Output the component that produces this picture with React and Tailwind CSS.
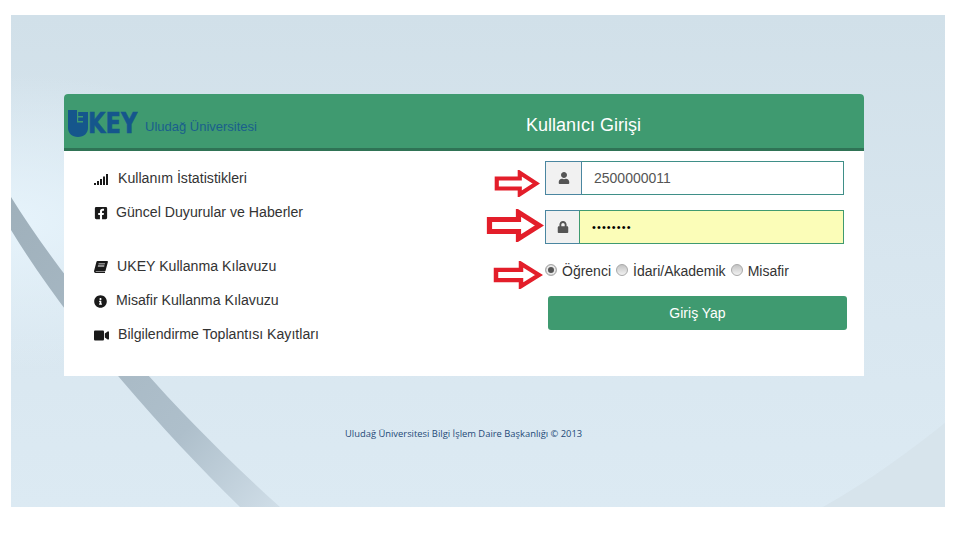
import { FaUser, FaLock, FaFacebookSquare, FaInfoCircle, FaVideo } from 'react-icons/fa';

const SignalIcon = () => (
  <svg width="15" height="11" viewBox="0 0 15 11" fill="currentColor">
    <rect x="0" y="9" width="2" height="2" />
    <rect x="3" y="7" width="2" height="4" />
    <rect x="6" y="5" width="2" height="6" />
    <rect x="9" y="2.5" width="2" height="8.5" />
    <rect x="12" y="0" width="2" height="11" />
  </svg>
);

const BookIcon = () => (
  <svg width="14" height="12" viewBox="0 0 14 12" fill="currentColor">
    <path d="M3.4 0 H13.2 C13.8 0 14 .4 13.9 1 L11.6 9.6 C11.4 10.4 11 10.6 10.2 10.6 H2 C1.6 10.6 1.5 11 2.2 11 H11 L11 12 H1.6 C.5 12 -.2 11 .1 9.8 L2.4 1 C2.6 .3 2.9 0 3.4 0 Z M4.6 2.4 L4.4 3.2 H10.8 L11 2.4 Z M4 4.6 L3.8 5.4 H10.2 L10.4 4.6 Z" fillRule="evenodd" />
  </svg>
);

const Arrow = ({ className, width, height }) => (
  <svg className={className} width={width} height={height} viewBox="0 0 50 30" preserveAspectRatio="none" fill="#fff" stroke="#e31e2a" strokeWidth="4.5">
    <path d="M3 9.5 H28 V3 L46 15 L28 27 V20.5 H3 Z" />
  </svg>
);

const LogoU = () => (
  <svg width="20" height="27" viewBox="0 0 20 27" fill="#15568c">
    <path d="M0 0 H9 V2 H20 V18 C20 23 16 27 10 27 C4 27 0 23 0 18 Z" />
    <path d="M9 0 H20 V1.2 H10.2 V6 H15 V7.4 H10.2 V11 H15 V12.4 H9 Z" fill="#3f9a70" />
  </svg>
);

const links = [
  { label: 'Kullanım İstatistikleri', icon: <SignalIcon />, gap: 'gap-[9px]' },
  { label: 'Güncel Duyurular ve Haberler', icon: <FaFacebookSquare size={14} />, gap: 'gap-[7px]' },
  { spacer: true },
  { label: 'UKEY Kullanma Kılavuzu', icon: <BookIcon />, gap: 'gap-[8px]' },
  { label: 'Misafir Kullanma Kılavuzu', icon: <FaInfoCircle size={13} />, gap: 'gap-[7px]' },
  { label: 'Bilgilendirme Toplantısı Kayıtları', icon: <FaVideo size={15} />, gap: 'gap-[9px]' },
];

const Radio = ({ label, checked }) => (
  <label className="flex items-center gap-[5px]">
    <input
      type="radio"
      name="role"
      defaultChecked={checked}
      className="appearance-none w-3 h-3 mb-[3px] rounded-full border border-[#a9a9a9] bg-gradient-to-b from-[#c4c4c4] to-[#f2f2f2] checked:bg-none checked:bg-[#e6e6e6] checked:shadow-[inset_0_0_0_2px_#e8e8e8,inset_0_0_0_6px_#555]"
    />
    {label}
  </label>
);

export default function App() {
  return (
    <div className="w-[960px] h-[540px] bg-white pl-[11px] pt-[15px] overflow-hidden font-['Liberation_Sans',Arial,sans-serif]">
      <div className="relative w-[934px] h-[492px] pt-[79px] pl-[53px] overflow-hidden bg-gradient-to-b from-[#d1e0e9] via-[#d8e6ef] to-[#dceaf3]">
        {/* background curves */}
        <svg className="absolute inset-0" width="934" height="492" viewBox="0 0 934 492">
          <defs>
            <linearGradient id="curve" x1="0" y1="0" x2="1" y2="1">
              <stop offset="0" stopColor="#9fb0bb" />
              <stop offset="0.7" stopColor="#aebfcb" />
              <stop offset="1" stopColor="#d0dee8" />
            </linearGradient>
            <radialGradient id="glow" cx="0" cy="0.42" r="0.3">
              <stop offset="0" stopColor="#e6f3fb" />
              <stop offset="1" stopColor="#e6f3fb" stopOpacity="0" />
            </radialGradient>
          </defs>
          <rect width="934" height="492" fill="url(#glow)" />
          <path d="M0 182 C55 270 150 385 269 492 L229 492 C140 405 55 305 0 215 Z" fill="url(#curve)" />
          <path d="M812 492 C860 465 900 435 934 408 V492 Z" fill="#d7e4ec" />
        </svg>

        <div className="relative w-[800px] h-[282px] bg-white rounded-t-[4px] overflow-hidden">
          <div className="flex items-center h-[57px] bg-[#3f9a70] border-b-[3px] border-[#2f7355]">
            <div className="flex items-center w-[462px] pl-[4px] pt-[5px]">
              <LogoU />
              <span className="inline-block w-[57px] font-['DejaVu_Sans',sans-serif] text-[29px] leading-none font-bold text-[#15568c] origin-left scale-x-[0.78] [-webkit-text-stroke:0.5px_#15568c]">KEY</span>
              <span className="pt-[6px] text-[13px] text-[#1a5f8c]">Uludağ Üniversitesi</span>
            </div>
            <h1 className="text-[18px] text-white pt-[9px]">Kullanıcı Girişi</h1>
          </div>

          <div className="flex pt-[11px]">
            <ul className="w-[481px] pl-[30px] -mt-px text-[14.15px] text-[#333] translate-y-px">
              {links.map((link, i) =>
                link.spacer ? (
                  <li key={i} className="h-5" />
                ) : (
                  <li key={i} className={`flex items-center h-[34px] ${link.gap}`}>
                    <span className="w-[15px] flex justify-start text-[#1a1a1a]">{link.icon}</span>
                    {link.label}
                  </li>
                )
              )}
            </ul>

            <form className="relative w-[303px] -mt-px">
              <Arrow className="absolute left-[-51px] top-[9px]" width="46" height="27" />
              <Arrow className="absolute left-[-59px] top-[48px]" width="58" height="33" />
              <Arrow className="absolute left-[-52px] top-[100px]" width="50" height="28" />

              <div className="flex w-[299px] h-[34px]">
                <span className="flex items-center justify-center w-[37px] bg-[#f1f1f1] border border-[#4a86a0] text-[#555]">
                  <FaUser size={12} />
                </span>
                <input
                  readOnly
                  value="2500000011"
                  className="flex-1 min-w-0 px-3 bg-white border border-l-0 border-[#3f8f88] text-[14px] text-[#555] outline-none"
                />
              </div>

              <div className="flex w-[299px] h-[34px] mt-[15px]">
                <span className="flex items-center justify-center w-[35px] bg-[#f1f1f1] border border-[#4a86a0] border-r-[#3f9a70] text-[#555]">
                  <FaLock size={12} />
                </span>
                <input
                  readOnly
                  type="password"
                  value="12345678"
                  className="flex-1 min-w-0 px-3 bg-[#fbfdb8] border border-l-0 border-[#3f9a70] text-[11px] tracking-[1.1px] text-black outline-none"
                />
              </div>

              <div className="flex items-center gap-[5px] h-5 mt-[17px] text-[14px] text-[#333]">
                <Radio label="Öğrenci" checked />
                <Radio label="İdari/Akademik" />
                <Radio label="Misafir" />
              </div>

              <button type="button" className="block w-[299px] h-[34px] mt-[15px] ml-[3px] rounded-[3px] bg-[#3f9a70] text-[14px] text-white">
                Giriş Yap
              </button>
            </form>
          </div>
        </div>

        <p className="relative mt-[52px] ml-[281px] text-[9.4px] leading-[12px] text-[#1f4a78] font-['Open_Sans',sans-serif]">
          Uludağ Üniversitesi Bilgi İşlem Daire Başkanlığı © 2013
        </p>
      </div>
    </div>
  );
}
